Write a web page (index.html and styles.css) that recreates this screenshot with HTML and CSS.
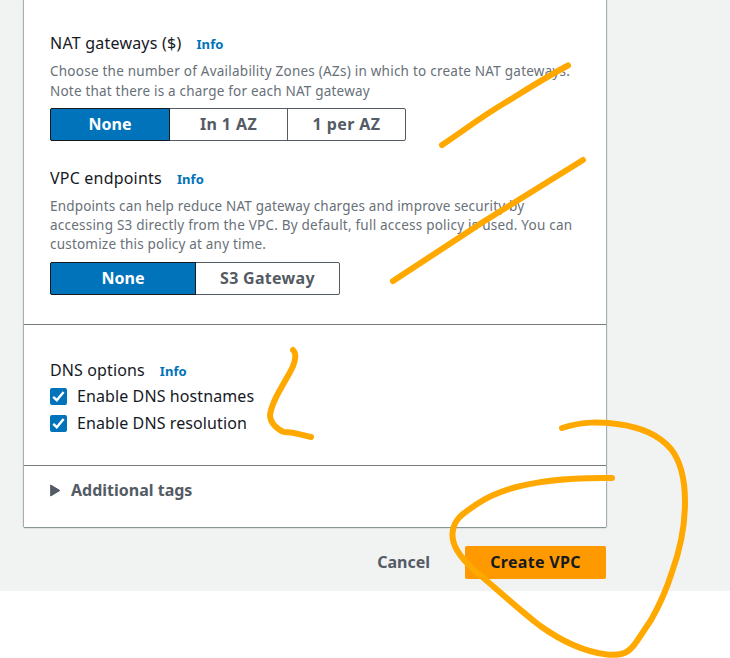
FILE: index.html
```html
<!DOCTYPE html>
<html lang="en">
<head>
<meta charset="utf-8">
<title>Create VPC</title>
<link rel="stylesheet" href="styles.css">
</head>
<body>
<div class="page">
  <main class="panel">
    <section class="section gateways">
      <h2 class="title"><span class="w-nat">NAT gateways ($)</span><a class="info">Info</a></h2>
      <p class="desc roomy"><span class="d1">Choose the number of Availability Zones (AZs) in which to create NAT gateways.</span><br><span class="d2">Note that there is a charge for each NAT gateway</span></p>
      <div class="segments three"><button class="seg on">None</button><button class="seg az">In 1 AZ</button><button class="seg az">1 per AZ</button></div>
      <h2 class="title second"><span class="w-vpc">VPC endpoints</span><a class="info">Info</a></h2>
      <p class="desc lower"><span class="d3">Endpoints can help reduce NAT gateway charges and improve security by</span><br><span class="d4">accessing S3 directly from the VPC. By default, full access policy is used. You can</span><br><span class="d5">customize this policy at any time.</span></p>
      <div class="segments two"><button class="seg on">None</button><button class="seg s3">S3 Gateway</button></div>
    </section>
    <section class="section dns">
      <h2 class="title"><span class="w-dns">DNS options</span><a class="info">Info</a></h2>
      <label class="check"><svg width="17" height="17" viewBox="0 0 17 17"><rect width="17" height="17" rx="2" fill="#0073bb"/><path d="M3.2 8.8 6.8 12.200 13.600 4" fill="none" stroke="#fff" stroke-width="2.500"/></svg><span class="w-host">Enable DNS hostnames</span></label>
      <label class="check"><svg width="17" height="17" viewBox="0 0 17 17"><rect width="17" height="17" rx="2" fill="#0073bb"/><path d="M3.2 8.8 6.8 12.200 13.600 4" fill="none" stroke="#fff" stroke-width="2.500"/></svg><span class="w-res">Enable DNS resolution</span></label>
    </section>
    <section class="section tags">
      <svg width="11" height="13" viewBox="0 0 11 13"><path d="M.7 1 9.8 6.5 .7 12Z" fill="#545b64" stroke="#545b64" stroke-linejoin="round"/></svg><span class="w-tags">Additional tags</span>
    </section>
  </main>
  <footer class="actions"><button class="cancel">Cancel</button><button class="create">Create VPC</button></footer>
</div>
<svg class="ink" width="730" height="658" viewBox="0 0 730 658">
  <path d="M442 145C463 131 481 117 503 104C526 90 546 77 568 65.500"/>
  <path d="M393 281L483 222L583 160"/>
  <path d="M293 350C298 355 294 366 289 374C281 388 272 402 270 415C270 423 278 430 284 432C293 432 302 435 311 437"/>
  <path d="M562 428C584 421 599 422 617 424C641 427 660 436 671 449C682 463 685 481 685 502C685 526 680 550 672 572C667 588 659 606 651 620L637 641C629 653 623 656 607 654.500C586 652 561 641 539 625C516 607 498 590 474 570C460 557 450 544 453 530C455 518 464 513 477 504C503 486 550 477 612 478"/>
</svg>
</body>
</html>
```
FILE: styles.css
```css
* { box-sizing: border-box; }
body { margin: 0; background: #fff; color: #16191f; font: 16px/22px "Noto Sans", "Open Sans", sans-serif; height: 658px; overflow: hidden; position: relative; }
h2, p { margin: 0; }
span { white-space: nowrap; }
button { font: inherit; font-weight: 700; padding: 0 0 2px; border: 0; background: none; color: #545b64; }
.page { height: 591px; background: #f1f3f3; padding-left: 24px; }
.panel { width: 582px; height: 527px; background: #fff; box-shadow: 0 1px 1px #879596, 1px 0 1px #aab7b8, -1px 0 1px #aab7b8; }
.section { padding-left: 26px; }
.gateways { height: 325px; padding-top: 32px; border-bottom: 1px solid #777a7d; }
.title { display: flex; gap: 15px; height: 22px; font-size: 16px; font-weight: 400; }
.info { color: #0073bb; font-size: 13px; font-weight: 700; line-height: 24px; letter-spacing: .1px; }
.desc { color: #687078; font-size: 13.5px; line-height: 19px; margin-top: 7px; height: 66px; }
.desc.lower { margin-top: 8px; height: 65px; }
.desc.roomy { line-height: 20px; height: 47px; }
.w-nat { letter-spacing: .22px; }
.w-vpc { letter-spacing: .2px; }
.w-dns { letter-spacing: .12px; }
.w-host, .w-res { letter-spacing: .1px; margin-top: -2px; }
.d1 { letter-spacing: .24px; }
.d2 { letter-spacing: .2px; }
.d3 { letter-spacing: .17px; }
.d4 { letter-spacing: .22px; }
.d5 { letter-spacing: .2px; }
.segments { display: flex; height: 33px; border: 1px solid #545b64; border-radius: 2px; }
.three { width: 356px; }
.two { width: 290px; }
.seg { flex: 1; border-left: 1px solid #545b64; }
.seg.on { background: #0073bb; color: #fff; margin: -1px 0; border: 1px solid #16191f; margin-left: -1px; border-radius: 2px 0 0 2px; }
.seg.on + .seg { border-left: 0; }
.az { letter-spacing: .4px; }
.s3 { letter-spacing: .3px; }
.three .on { flex: 0 0 120px; }
.two .on { flex: 0 0 146px; }
.second { margin-top: 26px; }
.dns { height: 141px; padding-top: 34px; border-bottom: 1px solid #777a7d; }
.check { display: flex; align-items: center; gap: 10px; height: 27px; }
.dns .title { margin-bottom: 2px; }
.tags { display: flex; align-items: flex-start; gap: 10px; padding-top: 13px; color: #545b64; font-weight: 700; }
.tags svg { margin-top: 5px; }
.actions { display: flex; justify-content: flex-end; align-items: center; width: 582px; margin-top: 19px; height: 33px; }
.cancel { margin-right: 35px; }
.create { width: 141px; height: 33px; background: #ff9900; color: #16191f; border-radius: 2px; letter-spacing: .3px; }
.ink { position: absolute; left: 0; top: 0; fill: none; stroke: #ffa900; stroke-width: 6; stroke-linecap: round; stroke-linejoin: round; pointer-events: none; }
```
